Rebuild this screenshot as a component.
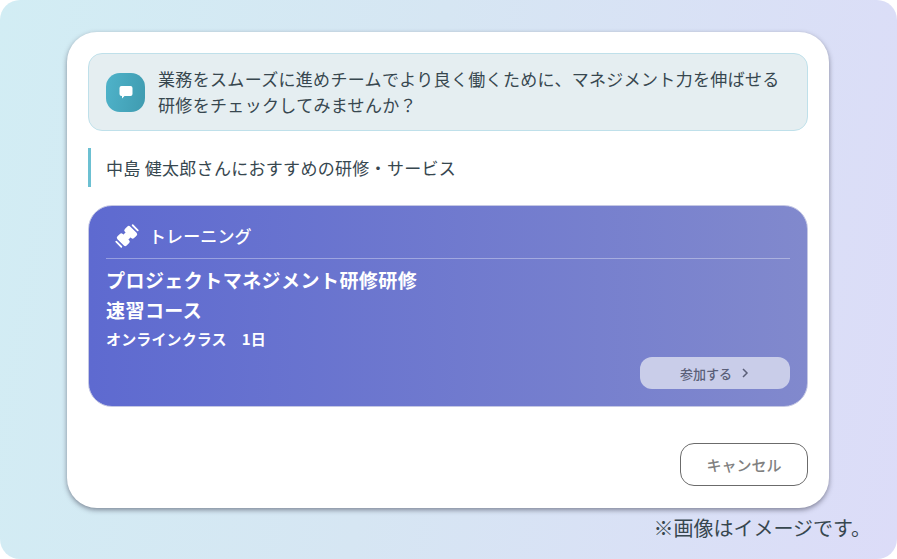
<script>
  const title = ['プロジェクトマネジメント研修研修', '速習コース'];
</script>

<main class="page">
  <section class="dialog">
    <div class="message">
      <div class="avatar">
        <svg width="16" height="16" viewBox="0 0 16 16" aria-hidden="true">
          <path d="M3.5 2h9A2 2 0 0 1 14.500 4v6a2 2 0 0 1-2 2H6.500L4 14.500V12h-.5a2 2 0 0 1-2-2V4a2 2 0 0 1 2-2z" fill="#fff" />
        </svg>
      </div>
      <p>業務をスムーズに進めチームでより良く働くために、マネジメント力を伸ばせる<br />研修をチェックしてみませんか？</p>
    </div>

    <h2 class="heading">中島 健太郎さんにおすすめの研修・サービス</h2>

    <article class="course">
      <header class="course-head">
        <svg class="dumbbell" width="28" height="28" viewBox="0 0 28 28" aria-hidden="true">
          <g transform="rotate(-45 14 14)" fill="#fff">
            <rect x="10" y="10.500" width="8" height="7" />
            <rect x="5" y="7.500" width="7.500" height="13" rx="2" />
            <rect x="15.500" y="7.500" width="7.500" height="13" rx="2" />
            <rect x="1.500" y="9.500" width="1.800" height="9" rx=".9" />
            <rect x="24.700" y="9.500" width="1.800" height="9" rx=".9" />
          </g>
        </svg>
        <span>トレーニング</span>
      </header>
      <h3>{title[0]}<br />{title[1]}</h3>
      <p class="meta">オンラインクラス　1日</p>
      <div class="course-foot">
        <button class="join">
          参加する
          <svg width="10" height="12" viewBox="0 0 10 12" aria-hidden="true">
            <path d="M3 2l4 4-4 4" fill="none" stroke="#5a5f78" stroke-width="1.500" />
          </svg>
        </button>
      </div>
    </article>

    <div class="actions">
      <button class="cancel">キャンセル</button>
    </div>
  </section>
  <p class="note">※画像はイメージです。</p>
</main>

<style>
  :global(body) {
    margin: 0;
    background: #fff;
  }
  .page {
    box-sizing: border-box;
    width: 897px;
    height: 559px;
    padding: 32px 34px 0 67px;
    border-radius: 20px;
    background: linear-gradient(100deg, #d2edf4 0%, #d6e6f3 45%, #dcdcf8 100%);
    font-family: "Noto Sans CJK JP", sans-serif;
    overflow: hidden;
  }
  .dialog {
    box-sizing: border-box;
    width: 762px;
    height: 476px;
    padding: 21px 21px 22px;
    border-radius: 30px;
    background: #fff;
    box-shadow: 0 2px 5px rgba(40, 40, 60, 0.5);
    display: flex;
    flex-direction: column;
  }
  .message {
    box-sizing: border-box;
    height: 78px;
    padding: 0 17px;
    display: flex;
    align-items: center;
    gap: 13px;
    border: 1px solid #bfe0ea;
    border-radius: 14px;
    background: #e5eef1;
  }
  .avatar {
    flex: none;
    width: 39px;
    height: 39px;
    border-radius: 14px;
    background: linear-gradient(100deg, #4fb3ca, #3f9bb0);
    display: flex;
    align-items: center;
    justify-content: center;
  }
  .message p {
    margin: 0;
    font-size: 17px;
    line-height: 26px;
    letter-spacing: 0.330px;
    color: #37474f;
    white-space: nowrap;
  }
  .heading {
    margin: 17px 0 18px;
    height: 39px;
    padding-left: 15px;
    border-left: 3px solid #6cc0d2;
    font-size: 17px;
    font-weight: 400;
    line-height: 39px;
    letter-spacing: 0.300px;
    color: #37474f;
  }
  .course {
    box-sizing: border-box;
    height: 202px;
    padding: 0 17px;
    border: 1px solid #c5c8e4;
    border-radius: 24px;
    background: linear-gradient(90deg, #5e6ad0 0%, #8189cd 100%);
    color: #fff;
  }
  .course-head {
    box-sizing: border-box;
    height: 53px;
    padding: 7px 0 0 7px;
    display: flex;
    align-items: center;
    gap: 8px;
    border-bottom: 1px solid rgba(255, 255, 255, 0.35);
    font-size: 17px;
    font-weight: 500;
    letter-spacing: 0.100px;
  }
  .dumbbell {
    flex: none;
  }
  h3 {
    margin: 6px 0 0;
    font-size: 19px;
    font-weight: 700;
    line-height: 30px;
    letter-spacing: 0.450px;
    white-space: nowrap;
  }
  .meta {
    margin: 4px 0 0;
    font-size: 15px;
    font-weight: 700;
    line-height: 20px;
    letter-spacing: 0.130px;
  }
  .course-foot {
    display: flex;
    justify-content: flex-end;
    margin-top: 8px;
  }
  .join {
    width: 150px;
    height: 32px;
    border: 0;
    border-radius: 12px;
    background: #c9cde9;
    color: #5a5f78;
    font: 500 13px "Noto Sans CJK JP", sans-serif;
    display: flex;
    align-items: center;
    justify-content: center;
    gap: 8px;
  }
  .actions {
    margin-top: auto;
    display: flex;
    justify-content: flex-end;
  }
  .cancel {
    width: 128px;
    height: 43px;
    border: 1px solid #6b6b6b;
    border-radius: 14px;
    background: #fff;
    color: #808080;
    font: 500 15px "Noto Sans CJK JP", sans-serif;
  }
  .note {
    margin: 7px -8px 0 0;
    text-align: right;
    font-size: 20px;
    line-height: 26px;
    color: #37474f;
  }
</style>
